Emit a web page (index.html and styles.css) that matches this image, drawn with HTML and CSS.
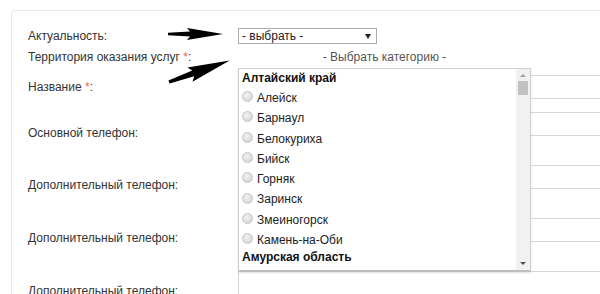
FILE: index.html
```html
<!DOCTYPE html>
<html lang="ru">
<head>
    <meta charset="UTF-8">
    <title>Анкета организации</title>
    <link rel="stylesheet" href="styles.css">
</head>
<body>
    <div class="card">
        <div class="row row-status">
            <div class="label">Актуальность:</div>
            <div class="field">
                <div class="select">- выбрать -<span class="caret"></span></div>
            </div>
        </div>
        <div class="row row-area">
            <div class="label">Территория оказания услуг <span class="req">*</span>:</div>
            <div class="field">
                <div class="category">- Выбрать категорию -</div>
                <div class="dropdown">
                    <div class="items">
                        <div class="group">Алтайский край</div>
                        <div class="item"><span class="radio"></span>Алейск</div>
                        <div class="item"><span class="radio"></span>Барнаул</div>
                        <div class="item"><span class="radio"></span>Белокуриха</div>
                        <div class="item"><span class="radio"></span>Бийск</div>
                        <div class="item"><span class="radio"></span>Горняк</div>
                        <div class="item"><span class="radio"></span>Заринск</div>
                        <div class="item"><span class="radio"></span>Змеиногорск</div>
                        <div class="item"><span class="radio"></span>Камень-на-Оби</div>
                        <div class="group group-last">Амурская область</div>
                    </div>
                    <div class="scrollbar">
                        <span class="arrow-up"></span>
                        <span class="thumb"></span>
                        <span class="track"></span>
                        <span class="arrow-down"></span>
                    </div>
                </div>
            </div>
        </div>
        <div class="row row-name">
            <div class="label">Название <span class="req">*</span>:</div>
            <div class="field"><div class="input"></div></div>
        </div>
        <div class="row row-phone row-first-phone">
            <div class="label">Основной телефон:</div>
            <div class="field"><div class="input"></div></div>
        </div>
        <div class="row row-phone">
            <div class="label">Дополнительный телефон:</div>
            <div class="field"><div class="input"></div></div>
        </div>
        <div class="row row-phone">
            <div class="label">Дополнительный телефон:</div>
            <div class="field"><div class="input"></div></div>
        </div>
        <div class="row row-phone">
            <div class="label">Дополнительный телефон:</div>
            <div class="field"><div class="input"></div></div>
        </div>
    </div>

    <!-- стрелки-пометки поверх формы -->
    <svg class="marks" width="600" height="294" viewBox="0 0 600 294">
        <g transform="translate(168,34)">
            <path d="M0,-1.3 L22,-2.4 L19,-6 L55,0 L19,6 L22,2.4 L0,1.3 Z" fill="#000"/>
        </g>
        <g transform="translate(169,82) rotate(-19.5) scale(1.17)">
            <path d="M0,-1.4 L22,-2.6 L19,-6.5 L55,0 L19,6.5 L22,2.6 L0,1.4 Z" fill="#000"/>
        </g>
    </svg>
</body>
</html>
```

FILE: styles.css
```css
body {
	margin: 0;
	font-family: "Liberation Sans", Arial, sans-serif;
	font-size: 12px;
	color: #333;
	background: #fff;
	overflow: hidden;
	height: 294px;
}

.card {
	margin: 10px 0 0 11px;
	width: 640px;
	height: 400px;
	padding: 16px 0 0 16px;
	border: 1px solid #e6e6e6;
	border-radius: 4px;
	box-sizing: border-box;
}

.row {
	display: flex;
	align-items: center;
}

.label {
	width: 210px;
	line-height: 14px;
	flex-shrink: 0;
}

.field {
	position: relative;
	width: 400px;
}

.req {
	color: #f55;
}

/* select */
.row-status {
	height: 18px;
}

.select {
	position: relative;
	width: 139px;
	height: 16px;
	line-height: 14px;
	padding-left: 3px;
	border: 1px solid #a9a9a9;
	box-sizing: border-box;
	color: #222;
}

.caret {
	position: absolute;
	right: 5px;
	top: 5px;
	border-left: 3px solid transparent;
	border-right: 3px solid transparent;
	border-top: 5px solid #222;
}

.row-area {
	margin-top: 3px;
	height: 18px;
}

.category {
	width: 293px;
	text-align: center;
	color: #555;
	line-height: 14px;
}

/* dropdown list */
.dropdown {
	position: absolute;
	z-index: 2;
	left: 0;
	top: 18px;
	width: 293px;
	height: 203px;
	display: flex;
	background: #fff;
	border: 1px solid #cfcfcf;
	border-bottom-color: #bdbdbd;
	box-shadow: 0 2px 2px rgba(0, 0, 0, 0.12);
	box-sizing: border-box;
}

.items {
	flex: 1;
	padding: 0 0 0 3px;
	overflow: hidden;
}

.group {
	font-weight: bold;
	color: #111;
	line-height: 19px;
}

.group-last {
	line-height: 14px;
}

.item {
	display: flex;
	align-items: center;
	line-height: 20.3px;
	color: #222;
}

.radio {
	width: 9px;
	height: 9px;
	margin: -3px 4px 0 0;
	border-radius: 50%;
	border: 1px solid #c4c4c4;
	background: radial-gradient(circle at 40% 35%, #f2f2f2, #cfcfcf);
}

.scrollbar {
	width: 14px;
	display: flex;
	flex-direction: column;
	align-items: center;
	background: #f1f1f1;
}

.arrow-up {
	margin-top: 5px;
	border-left: 3px solid transparent;
	border-right: 3px solid transparent;
	border-bottom: 3px solid #a3a3a3;
}

.thumb {
	margin-top: 4px;
	width: 10px;
	height: 14px;
	background: #c1c1c1;
}

.track {
	flex: 1;
}

.arrow-down {
	margin-bottom: 5px;
	border-left: 3px solid transparent;
	border-right: 3px solid transparent;
	border-top: 3px solid #505050;
}

/* text inputs */
.input {
	height: 24px;
	border: 1px solid #d6d6d6;
	box-sizing: border-box;
}

.row-name {
	margin-top: 9px;
}

.row-phone {
	align-items: flex-start;
	height: 24px;
	margin-top: 29px;
}

.row-phone .label {
	padding-top: 13px;
}

.row-first-phone {
	margin-top: 13px;
}

.row-first-phone .label {
	padding-top: 14px;
}

.marks {
	position: absolute;
	left: 0;
	top: 0;
	pointer-events: none;
}
```
